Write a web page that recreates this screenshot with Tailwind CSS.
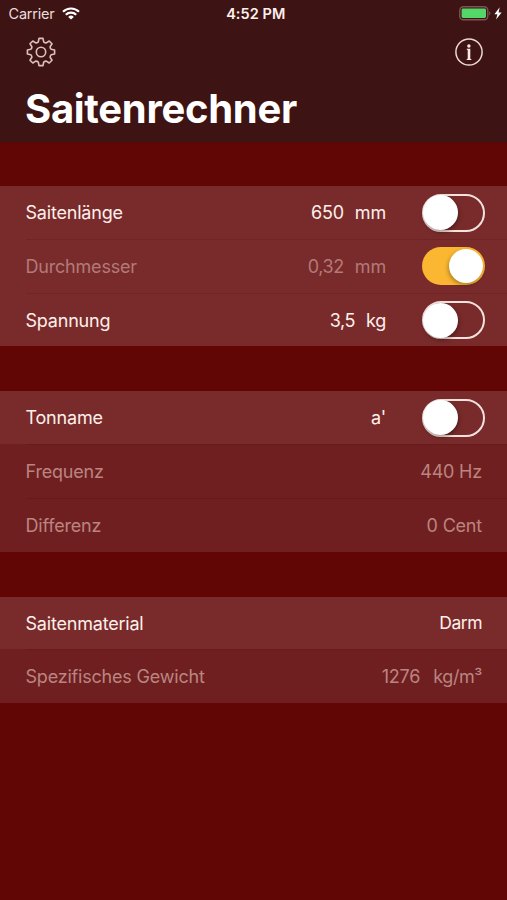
<!DOCTYPE html>
<html lang="de">
<head>
<meta charset="utf-8">
<title>Saitenrechner</title>
<script src="https://cdn.jsdelivr.net/npm/@tailwindcss/browser@4"></script>
</head>
<body class="h-[900px] w-[507px] overflow-hidden bg-[#610605] font-['Inter','Liberation_Sans',sans-serif] text-[18px] tracking-[-0.2px] text-[#fff0eb]">
<header class="flex h-[142px] flex-col bg-[#3e1314]">
  <div class="grid h-7 grid-cols-3 items-center pl-[8.5px] pr-[5px]">
    <div class="flex items-center gap-[7px] text-[14.5px] text-[#eadcda]"><span>Carrier</span>
      <svg class="h-[13px] w-[18px] -translate-y-[1px]" viewBox="0 0 18 13" fill="none" stroke="#fff" stroke-width="2.2"><path d="M1 4.8a11.4 11.4 0 0 1 16 0M3.8 7.8a7.4 7.4 0 0 1 10.4 0"/><path d="M9 12.6 6.2 9.9a4 4 0 0 1 5.6 0z" fill="#fff" stroke="none"/></svg>
    </div>
    <div class="pl-[1px] text-center text-[14.5px] font-semibold tracking-[0.05px] whitespace-nowrap">4:52 PM</div>
    <div class="flex -translate-y-[1px] items-center justify-end gap-[3px]">
      <svg class="h-[15px] w-[32px]" viewBox="0 0 32 15"><rect x=".8" y=".8" width="28" height="13" rx="3.6" fill="none" stroke="#7b5554" stroke-width="1.4"/><rect x="2.6" y="2.6" width="24.4" height="9.4" rx="1.4" fill="#53d769"/><path d="M30.2 5.2c1.8.8 1.8 3.4 0 4.2z" fill="#7b5554"/></svg>
      <svg class="h-[13px] w-[8px]" viewBox="0 0 8 13"><path d="M5.7.3.4 7.2h3L2.1 12.6l5.5-7.2h-3z" fill="#fff"/></svg>
    </div>
  </div>
  <div class="flex h-12 items-center justify-between pl-[25.5px] pr-[23px]">
    <svg class="h-[30px] w-[30px]" viewBox="-15 -15 30 30" fill="none" stroke="#dcc0b9" stroke-width="1.6" stroke-linejoin="round"><path d="M-2.7-10.2-2-13.6H2L2.7-10.2Q4-9 5.3-9.12L8.2-11.03 11.03-8.2 9.12-5.3Q9-4 10.2-2.7L13.6-2V2L10.2 2.7Q9 4 9.12 5.3L11.03 8.2 8.2 11.03 5.3 9.12Q4 9 2.7 10.2L2 13.6H-2L-2.7 10.2Q-4 9-5.3 9.12L-8.2 11.03-11.03 8.2-9.12 5.3Q-9 4-10.2 2.7L-13.6 2V-2L-10.2-2.7Q-9-4-9.12-5.3L-11.03-8.2-8.2-11.03-5.3-9.12Q-4-9-2.7-10.2Z"/><circle r="4.7"/></svg>
    <svg class="h-[30px] w-[30px]" viewBox="-15 -15 30 30" fill="#fbe9e4"><circle r="13.1" fill="none" stroke="#ecd8d3" stroke-width="1.5"/><circle cx="-.1" cy="-6" r="1.7"/><path d="M-2.3-3.2H1.3V6.8L2.4 7.2V7.9H-2.4V7.2L-1.3 6.8V-2.1L-2.3-2.4Z"/></svg>
  </div>
  <h1 class="pl-[25px] pt-[8px] text-[40px] leading-[50px] font-bold tracking-[-0.3px] text-white">Saitenrechner</h1>
</header>
<main class="flex flex-col gap-[45px] border-t border-[#520b0c] pt-[43px]">
  <section>
    <div class="flex h-[53px] items-center bg-[#792b2b] pl-[25.5px] pr-[22px]"><span>Saitenlänge</span><span class="ml-auto flex gap-[11px]"><span>650</span><span>mm</span></span><span class="ml-[36px] flex h-[38px] w-[63px] items-center rounded-full border-[2.5px] border-[#f3e2de]"><i class="-ml-[1px] h-[35px] w-[35px] rounded-full bg-white shadow-[1px_2px_4px_rgba(0,0,0,.35)]"></i></span></div>
    <div class="bg-[#792b2b] pl-[25.5px]"><div class="flex h-[54px] items-center border-t border-[#6f2425] pr-[22px] pb-[1px] text-[#b27a78]"><span>Durchmesser</span><span class="ml-auto flex gap-[11px]"><span class="tracking-[-0.4px]">0,32</span><span>mm</span></span><span class="ml-[36px] flex h-[38px] w-[63px] items-center justify-end rounded-full bg-[#fbb731] pr-[2px]"><i class="h-[34px] w-[34px] rounded-full bg-white shadow-[-1px_2px_4px_rgba(0,0,0,.3)]"></i></span></div></div>
    <div class="bg-[#792b2b] pl-[25.5px]"><div class="flex h-[53px] items-center border-t border-[#6f2425] pr-[22px]"><span>Spannung</span><span class="ml-auto flex gap-[11px]"><span class="tracking-[-0.5px]">3,5</span><span>kg</span></span><span class="ml-[36px] flex h-[38px] w-[63px] items-center rounded-full border-[2.5px] border-[#f3e2de]"><i class="-ml-[1px] h-[35px] w-[35px] rounded-full bg-white shadow-[1px_2px_4px_rgba(0,0,0,.35)]"></i></span></div></div>
  </section>
  <section>
    <div class="flex h-[53px] items-center bg-[#792b2b] pl-[25.5px] pr-[22px]"><span>Tonname</span><span class="ml-auto">a'</span><span class="ml-[36px] flex h-[38px] w-[63px] items-center rounded-full border-[2.5px] border-[#f3e2de]"><i class="-ml-[1px] h-[35px] w-[35px] rounded-full bg-white shadow-[1px_2px_4px_rgba(0,0,0,.35)]"></i></span></div>
    <div class="bg-[#701f21] pl-[25.5px]"><div class="flex h-[54px] items-center justify-between border-t border-[#68191b] pr-[25px] text-[#ba8580]"><span>Frequenz</span><span>440 Hz</span></div></div>
    <div class="bg-[#701f21] pl-[25.5px]"><div class="flex h-[54px] items-center justify-between border-t border-[#68191b] pr-[25px] text-[#ba8580]"><span>Differenz</span><span>0 Cent</span></div></div>
  </section>
  <section>
    <div class="flex h-[52px] items-center justify-between bg-[#792b2b] pl-[25.5px] pr-[25px]"><span>Saitenmaterial</span><span class="text-[17.5px] tracking-[-0.5px]">Darm</span></div>
    <div class="bg-[#701f21] pl-[25.5px]"><div class="flex h-[54px] items-center border-t border-[#68191b] pr-[25px] text-[#ba8580]"><span>Spezifisches Gewicht</span><span class="ml-auto flex gap-[13px]"><span>1276</span><span class="tracking-[-0.4px]">kg/m³</span></span></div></div>
  </section>
</main>
</body>
</html>
